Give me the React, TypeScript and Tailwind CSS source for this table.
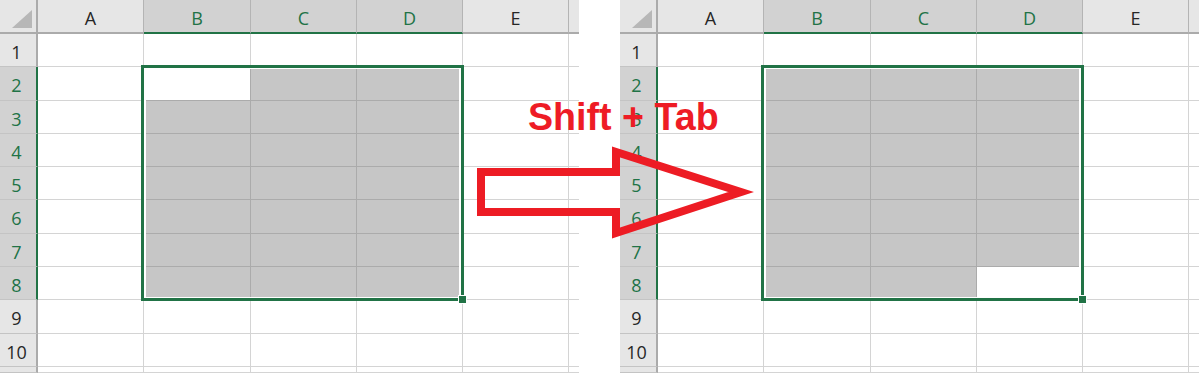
import React from "react";

type Col = { label: string; w: string; sel: boolean };
const COLS: Col[] = [
  { label: "A", w: "w-[106px]", sel: false },
  { label: "B", w: "w-[107px]", sel: true },
  { label: "C", w: "w-[106px]", sel: true },
  { label: "D", w: "w-[106px]", sel: true },
  { label: "E", w: "w-[106px]", sel: false },
  { label: "", w: "w-[10px]", sel: false },
];

const ROWS = [
  { n: 1, h: "h-[33px]" },
  { n: 2, h: "h-[34px]" },
  { n: 3, h: "h-[33px]" },
  { n: 4, h: "h-[33px]" },
  { n: 5, h: "h-[33px]" },
  { n: 6, h: "h-[34px]" },
  { n: 7, h: "h-[33px]" },
  { n: 8, h: "h-[33px]" },
  { n: 9, h: "h-[34px]" },
  { n: 10, h: "h-[33px]" },
  { n: 11, h: "h-[6px]" },
];

const font = "font-['Open_Sans','Liberation_Sans',sans-serif]";

function Sheet({ activeRow, activeCol }: { activeRow: number; activeCol: number }) {
  return (
    <div className="relative w-[579px] h-[373px] overflow-hidden bg-white shrink-0">
      {/* header row */}
      <div className="flex h-[34px]">
        <div className="relative w-[38px] h-full bg-[#e6e6e6] border-r-2 border-b-2 border-[#ababab]">
          <svg className="absolute left-0 top-0" width="38" height="34" viewBox="0 0 38 34">
            <polygon points="32,10 32,28 12,28" fill="#b7b7b7" />
          </svg>
        </div>
        {COLS.map((c, i) => (
          <div
            key={i}
            className={`${c.w} h-full flex items-center justify-center pt-[4px] text-[18px] ${font} ${
              c.sel
                ? "bg-[#d2d2d2] text-[#217346] border-b-2 border-b-[#217346]"
                : "bg-[#e6e6e6] text-[#262626] border-b-2 border-b-[#ababab]"
            } ${i < 5 ? "border-r border-r-[#b4b4b4]" : ""}`}
          >
            {c.label}
          </div>
        ))}
      </div>
      {ROWS.map((r) => {
        const rowSel = r.n >= 2 && r.n <= 8;
        return (
          <div key={r.n} className={`flex ${r.h}`}>
            <div
              className={`w-[38px] h-full flex items-center justify-center pr-[3px] pt-[4px] text-[18px] ${font} border-b border-b-[#c4c4c4] ${
                rowSel
                  ? "bg-[#d2d2d2] text-[#217346] border-r-2 border-r-[#217346]"
                  : "bg-[#e6e6e6] text-[#262626] border-r-2 border-r-[#ababab]"
              }`}
            >
              {r.n <= 10 ? r.n : ""}
            </div>
            {COLS.map((c, ci) => {
              const inSel = rowSel && c.sel;
              const active = r.n === activeRow && ci === activeCol;
              let cls = "bg-white border-[#d4d4d4]";
              if (inSel) cls = active ? "bg-white border-[#ababab]" : "bg-[#c6c6c6] border-[#ababab]";
              return (
                <div
                  key={ci}
                  className={`${c.w} h-full border-b ${ci < 5 ? "border-r" : ""} ${cls}`}
                />
              );
            })}
          </div>
        );
      })}
      {/* selection border */}
      <div className="absolute left-[141px] top-[65px] w-[323px] h-[236px] border-[3px] border-[#217346]">
        <div className="w-full h-full border-t border-b border-l-2 border-r-2 border-white" />
      </div>
      {/* fill handle */}
      <div className="absolute left-[458px] top-[295px] w-[9px] h-[9px] bg-[#217346] border border-white" />
    </div>
  );
}

export default function App() {
  return (
    <div className="relative w-[1199px] h-[373px] bg-white overflow-hidden">
      <div className="flex">
        <Sheet activeRow={2} activeCol={1} />
        <div className="w-[41px] shrink-0 bg-white" />
        <Sheet activeRow={8} activeCol={3} />
      </div>
      <svg
        className="absolute left-0 top-0 pointer-events-none"
        width="1199"
        height="373"
        viewBox="0 0 1199 373"
      >
        <polygon
          points="481,172 616,172 616,152 741,192 616,233 616,212 481,212"
          fill="none"
          stroke="#ed1c24"
          strokeWidth="8"
          strokeLinejoin="miter"
          strokeMiterlimit="10"
        />
      </svg>
      <div className="absolute left-[528px] top-[97px] origin-left scale-x-[0.965] whitespace-nowrap text-[39px] leading-[39px] font-bold text-[#ee1c25] font-['Liberation_Sans',Arial,sans-serif]">
        Shift + Tab
      </div>
    </div>
  );
}
